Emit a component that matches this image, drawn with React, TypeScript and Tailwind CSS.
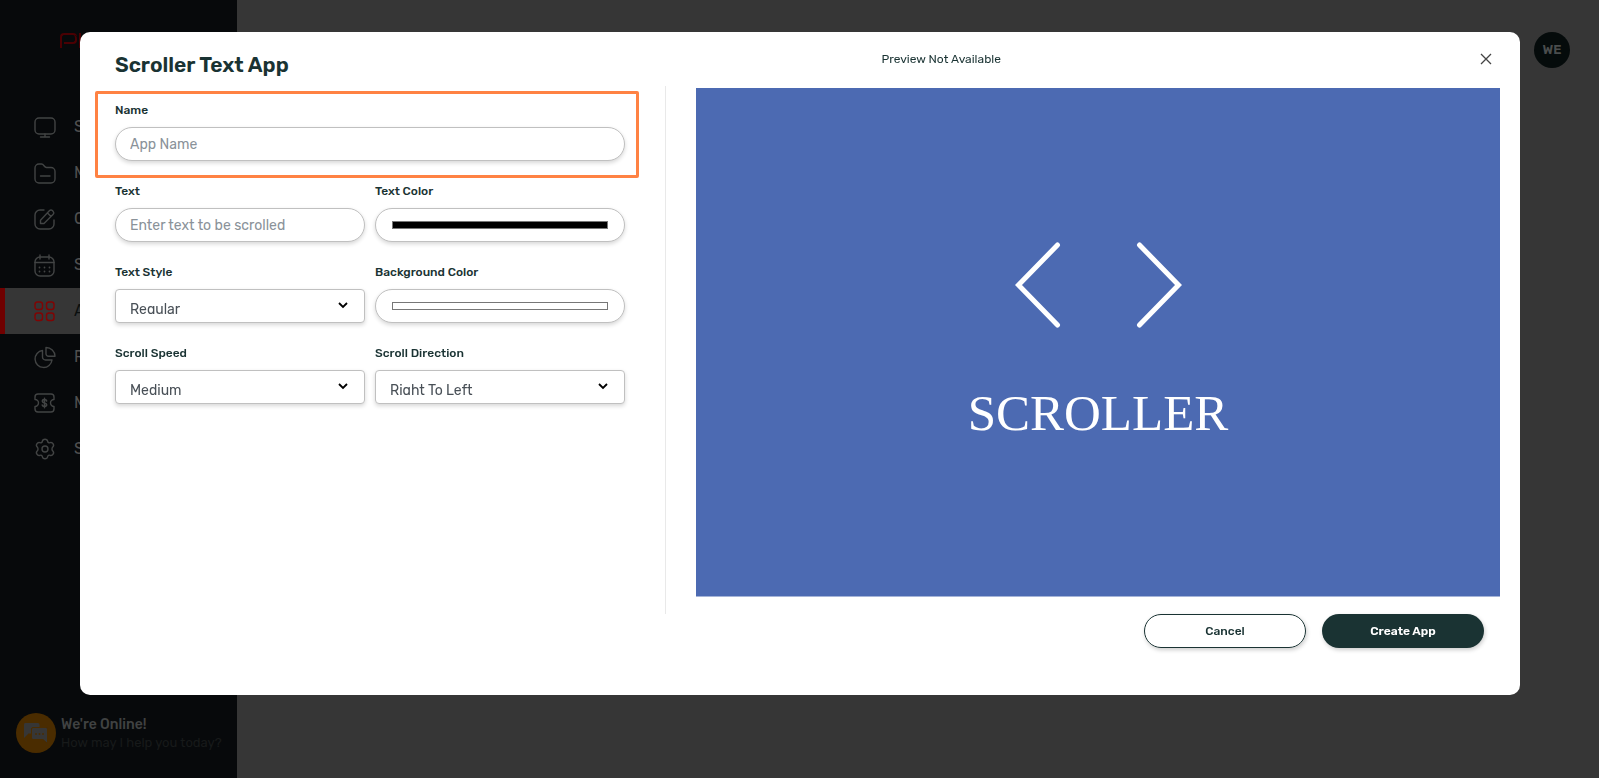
import { useState, type ReactNode } from "react";

const INK = "text-[#1a3333]";
const FIELD =
  "block w-full h-[34px] bg-white border border-[#c0c0c0] shadow-[0_2px_4px_rgba(0,0,0,0.16)] px-[14px] text-[14px] outline-none";

interface NavItem {
  label: string;
  icon: ReactNode;
  active?: boolean;
}

const NAV: NavItem[] = [
  {
    label: "Screens",
    icon: (
      <>
        <rect x="1" y="2" width="20" height="16" rx="4" />
        <path d="M11 18v3M6.500 21h9" />
      </>
    ),
  },
  {
    label: "Media",
    icon: (
      <path d="M1 6a4 4 0 0 1 4-4h2.500c2.500 0 2.500 3.500 5 3.500H17a4 4 0 0 1 4 4V17a4 4 0 0 1-4 4H5a4 4 0 0 1-4-4zM6.500 14h9.500" />
    ),
  },
  {
    label: "Content",
    icon: (
      <>
        <path d="M10 2H6a5 5 0 0 0-5 5v9a5 5 0 0 0 5 5h9a5 5 0 0 0 5-5v-4" />
        <path d="M6.500 15.500v-3.200L15.600 2.600a2 2 0 0 1 2.800 0l.8.800a2 2 0 0 1 0 2.800L10 15.500zM13.500 5l3.500 3.500" />
      </>
    ),
  },
  {
    label: "Schedule",
    icon: (
      <>
        <rect x="1" y="3" width="19" height="19" rx="5" />
        <path d="M1 8.500h19M6 1v4M15 1v4" />
        <path
          d="M5.500 13.500h.01M10.500 13.500h.01M15.500 13.500h.01M5.500 17.500h.01M10.500 17.500h.01M15.500 17.500h.01"
          strokeWidth="1.800"
        />
      </>
    ),
  },
  {
    label: "Apps",
    active: true,
    icon: (
      <>
        <rect x="1" y="2" width="7.500" height="7.500" rx="2.500" />
        <rect x="12.500" y="2" width="7.500" height="7.500" rx="2.500" />
        <rect x="1" y="13" width="7.500" height="7.500" rx="2.500" />
        <rect x="12.500" y="13" width="7.500" height="7.500" rx="2.500" />
      </>
    ),
  },
  {
    label: "Reports",
    icon: (
      <>
        <path d="M8.500 4.500A8.500 8.500 0 1 0 18 14h-6.500a3 3 0 0 1-3-3z" />
        <path d="M12 1.500c4.800 0 9 4 9 8.800H14.500a2.500 2.500 0 0 1-2.500-2.500z" />
      </>
    ),
  },
  {
    label: "Monetize",
    icon: (
      <>
        <path d="M4 2h13a3 3 0 0 1 3 3v2.500a3.500 3.500 0 0 0 0 7V17a3 3 0 0 1-3 3H4a3 3 0 0 1-3-3v-2.500a3.500 3.500 0 0 0 0-7V5a3 3 0 0 1 3-3z" />
        <path
          d="M12.700 9c-.2-1-1-1.500-2.200-1.500S8.300 8 8.300 9.200c0 2.400 4.400 1.200 4.400 3.600 0 1.200-1 1.700-2.200 1.700s-2.100-.5-2.300-1.500M10.500 6.300v9.400"
          strokeWidth="1.500"
        />
      </>
    ),
  },
  {
    label: "Settings",
    icon: (
      <>
        <path d="M8.300 3.500c.5-3 4.900-3 5.400 0 .2 1 1.200 1.600 2.200 1.200 2.800-1 5 2.500 2.700 4.500-.8.700-.8 2.900 0 3.600 2.300 2 0 5.600-2.700 4.500-1-.4-2 .2-2.200 1.200-.5 3-4.900 3-5.400 0-.2-1-1.200-1.600-2.200-1.200-2.700 1.100-5-2.500-2.700-4.500.8-.7.800-2.900 0-3.600-2.300-2-.1-5.500 2.700-4.500 1 .4 2-.2 2.200-1.200z" />
        <circle cx="11" cy="11" r="3" />
      </>
    ),
  },
];

function Sidebar() {
  return (
    <aside className="w-[237px] shrink-0 bg-[#07090b] flex flex-col justify-between">
      <div>
        <div className="h-[104px] pl-[60px] pt-[33px] flex gap-[2px]">
          {/* brand mark */}
          <span className="w-[17px] h-[15px] border-l-2 border-t-2 border-[#4a0003] rounded-tl-[4px] rounded-tr-[4px] flex">
            <span className="w-full h-[9px] ml-[2px] border-r-2 border-b-2 border-[#4a0003] rounded-r-[4px]" />
          </span>
          <span className="w-[2px] h-[15px] bg-[#4a0003]" />
        </div>
        <nav>
          {NAV.map((item) => (
            <a
              key={item.label}
              href="#"
              className={`h-[46px] flex items-center border-l-[5px] pl-[29px] gap-[18px] text-base ${
                item.active
                  ? "bg-[#363636] border-[#700000] text-[#0b0f0f]"
                  : "border-transparent text-[#505050]"
              }`}
            >
              <svg
                viewBox="0 0 22 23"
                className={`w-[22px] h-[23px] ${item.active ? "text-[#800404]" : "text-[#424444]"}`}
                fill="none"
                stroke="currentColor"
                strokeWidth="1.400"
                strokeLinecap="round"
                strokeLinejoin="round"
              >
                {item.icon}
              </svg>
              {item.label}
            </a>
          ))}
        </nav>
      </div>

      <div className="flex items-center gap-[5px] pl-4 pb-[25px]">
        <span className="w-10 h-10 rounded-full bg-[#4a2c00] flex items-center justify-center">
          <svg viewBox="0 0 24 21" className="w-6 h-[21px]">
            <path d="M1 0h13a1.500 1.500 0 0 1 1.500 1.500V9a1.500 1.500 0 0 1-1.500 1.500H4.500L0 15V1.500A1.500 1.500 0 0 1 1 0z" fill="#363636" />
            <path
              d="M9 4.500h13a1.500 1.500 0 0 1 1.500 1.500v14.500l-4.500-4H9A1.500 1.500 0 0 1 7.500 15V6A1.500 1.500 0 0 1 9 4.500z"
              fill="#363636"
              stroke="#4a2c00"
            />
            <path d="M12 11h.01M15.500 11h.01M19 11h.01" stroke="#4a2c00" strokeWidth="1.800" strokeLinecap="round" />
          </svg>
        </span>
        <div className="whitespace-nowrap pt-[2px]">
          <p className="text-[14px] leading-[18px] font-medium text-[#404242]">We're Online!</p>
          <p className="text-[13px] leading-[18px] text-[#171a1a]">How may I help you today?</p>
        </div>
      </div>
    </aside>
  );
}

function Label({ htmlFor, children }: { htmlFor: string; children: ReactNode }) {
  return (
    <label htmlFor={htmlFor} className={`block text-[12px] leading-4 mb-[9px] font-medium ${INK}`}>
      {children}
    </label>
  );
}

interface SelectFieldProps {
  id: string;
  label: string;
  options: string[];
}

function SelectField({ id, label, options }: SelectFieldProps) {
  return (
    <div>
      <Label htmlFor={id}>{label}</Label>
      <div className="relative">
        <select id={id} className={`${FIELD} appearance-none rounded-[4px] pt-3 pb-2 leading-4 text-[#495057]`}>
          {options.map((option) => (
            <option key={option}>{option}</option>
          ))}
        </select>
        <svg
          viewBox="0 0 10 7"
          className="absolute right-[17px] top-[13px] w-[10px] h-[7px] pointer-events-none"
          fill="none"
          stroke="#000"
          strokeWidth="1.800"
        >
          <path d="M1 1l4 4 4-4" />
        </svg>
      </div>
    </div>
  );
}

function ColorField({ id, label, initial }: { id: string; label: string; initial: string }) {
  const [color, setColor] = useState(initial);
  return (
    <div>
      <Label htmlFor={id}>{label}</Label>
      <input
        id={id}
        type="color"
        value={color}
        onChange={(e) => setColor(e.target.value)}
        className={`${FIELD} rounded-full py-2`}
      />
    </div>
  );
}

export default function App() {
  const [name, setName] = useState("");
  const [text, setText] = useState("");

  return (
    <div className="min-h-screen flex bg-[#363636] font-[Rubik,Roboto,sans-serif]">
      <Sidebar />
      <header className="flex-1 flex justify-end items-start pt-8 pr-[29px]">
        <span className="w-9 h-9 rounded-full bg-[#050b0b] text-[#4a4d4d] text-[13px] font-semibold flex items-center justify-center">
          WE
        </span>
      </header>

      <div className="fixed inset-0 pl-20 pr-[79px] pt-8 overflow-auto">
        <div role="dialog" aria-labelledby="dialog-title" className="bg-white rounded-[10px] pb-[47px]">
          <div className="flex">
            <form className="w-[585px] shrink-0 pl-[35px] pr-10">
              <h1 id="dialog-title" className={`pt-5 text-[21px] leading-[26px] font-semibold ${INK}`}>
                Scroller Text App
              </h1>

              <div className="-ml-5 -mr-[14px] mt-[13px] border-[3px] border-[#ff8243] rounded-[2px] pl-[17px] pr-[11px] h-[87px] pt-2">
                <Label htmlFor="name">Name</Label>
                <input
                  id="name"
                  placeholder="App Name"
                  value={name}
                  onChange={(e) => setName(e.target.value)}
                  className={`${FIELD} rounded-full placeholder:text-[#8a9299]`}
                />
              </div>

              <div className="grid grid-cols-2 gap-x-[10px] gap-y-[22px] mt-[5px]">
                <div>
                  <Label htmlFor="text">Text</Label>
                  <input
                    id="text"
                    placeholder="Enter text to be scrolled"
                    value={text}
                    onChange={(e) => setText(e.target.value)}
                    className={`${FIELD} rounded-full placeholder:text-[#8a9299]`}
                  />
                </div>
                <ColorField id="text-color" label="Text Color" initial="#000000" />
                <SelectField id="text-style" label="Text Style" options={["Regular", "Bold", "Italic"]} />
                <ColorField id="bg-color" label="Background Color" initial="#ffffff" />
                <SelectField id="speed" label="Scroll Speed" options={["Medium", "Slow", "Fast"]} />
                <SelectField id="direction" label="Scroll Direction" options={["Right To Left", "Left To Right"]} />
              </div>
            </form>

            <section className="flex-1 pr-5 flex flex-col">
              <div className="h-[54px] pl-[31px] flex items-center justify-between">
                <p className={`w-[61%] text-center text-[12px] ${INK}`}>Preview Not Available</p>
                <button type="button" aria-label="Close" className="p-2">
                  <svg viewBox="0 0 12 12" className="w-3 h-3" stroke="#444" strokeWidth="1.300">
                    <path d="M1 1l10 10M11 1L1 11" />
                  </svg>
                </button>
              </div>
              <div className="border-l border-[#e9e9e9] pl-[30px] pt-[2px] pb-[17px]">
                <div className="aspect-[804/509] bg-[#4c6ab2] border-b border-[#a5b4d8] flex flex-col items-center justify-center">
                  <svg
                    viewBox="0 0 170 88"
                    className="w-[170px] h-[88px]"
                    fill="none"
                    stroke="#fff"
                    strokeWidth="5"
                    strokeLinecap="round"
                  >
                    <path d="M44.500 4L5.500 44l39 40M126.500 4L165.500 44l-39 40" />
                  </svg>
                  <span className="mt-[54px] text-[51px] leading-[60px] text-white font-['Liberation_Serif',serif]">
                    SCROLLER
                  </span>
                </div>
              </div>
            </section>
          </div>

          <div className="flex justify-end gap-4 pr-9 text-[12px]">
            <button
              type="button"
              className={`w-[162px] h-[34px] rounded-full border border-[#1a3333] font-medium shadow-[1px_2px_4px_rgba(0,0,0,0.2)] ${INK}`}
            >
              Cancel
            </button>
            <button
              type="button"
              className="w-[162px] h-[34px] rounded-full bg-[#1a3333] font-semibold text-white shadow-[1px_2px_4px_rgba(0,0,0,0.2)]"
            >
              Create App
            </button>
          </div>
        </div>
      </div>
    </div>
  );
}
